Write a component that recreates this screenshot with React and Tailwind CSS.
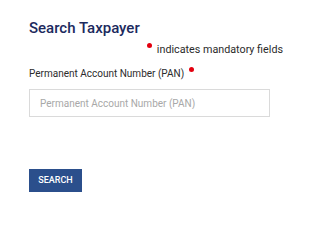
export default function App() {
  return (
    <div className="w-[294px] h-[200px] bg-white pl-[29px] pr-[11px] pt-[19px] font-[Roboto,sans-serif]">
      <h1 className="text-[15px] leading-[18px] font-medium text-[#1c2a5e]">Search Taxpayer</h1>

      <div className="flex justify-end items-start mt-[6px]">
        <span className="w-[5px] h-[5px] rounded-full bg-[#e3000f] mr-[5px]"></span>
        <span className="text-[10.75px] leading-[13px] text-[#2b2b2b]">indicates mandatory fields</span>
      </div>

      <div className="flex items-start mt-[12px]">
        <label htmlFor="pan" className="text-[10px] leading-[12px] text-[#2b2b2b]">
          Permanent Account Number (PAN)
        </label>
        <span className="w-[5px] h-[5px] rounded-full bg-[#e3000f] ml-[5px] -mt-[1px]"></span>
      </div>

      <input
        id="pan"
        className="block mt-[9px] w-[241px] h-[28px] border border-[#dadada] px-[10px] pt-[1px] text-[10px] text-[#333] outline-none placeholder:text-[#a8a8a8]"
        placeholder="Permanent Account Number (PAN)"
      />

      <div className="mt-[49px]">
        <button className="w-[53px] h-[23px] bg-[#2b4f8c] text-white text-[9px] font-medium leading-none">
          SEARCH
        </button>
      </div>
    </div>
  );
}
